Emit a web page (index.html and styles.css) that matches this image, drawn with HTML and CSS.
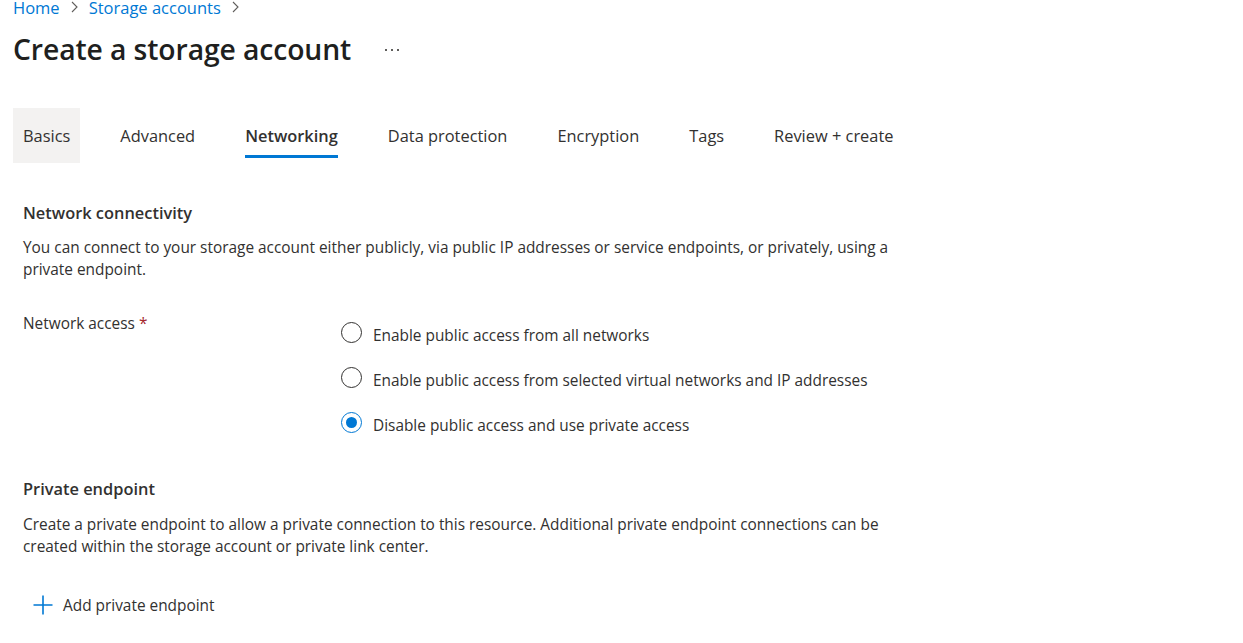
FILE: index.html
```html
<!DOCTYPE html>
<html lang="en">
<head>
<meta charset="utf-8">
<title>Create a storage account</title>
<link rel="stylesheet" href="styles.css">
</head>
<body>
<nav class="breadcrumb">
  <a class="crumb" href="#">Home</a>
  <span class="chev"><svg width="7" height="12" viewBox="0 0 7 12"><path d="M1 1 L6 6 L1 11" fill="none" stroke="#605e5c" stroke-width="1.1"/></svg></span>
  <a class="crumb" href="#">Storage accounts</a>
  <span class="chev"><svg width="7" height="12" viewBox="0 0 7 12"><path d="M1 1 L6 6 L1 11" fill="none" stroke="#605e5c" stroke-width="1.1"/></svg></span>
</nav>
<header class="title-row">
  <h1 class="title">Create a storage account</h1>
  <span class="more"><i></i><i></i><i></i></span>
</header>
<div class="tabs">
  <span class="tab tab-hover">Basics</span>
  <span class="tab">Advanced</span>
  <span class="tab tab-active">Networking</span>
  <span class="tab">Data protection</span>
  <span class="tab">Encryption</span>
  <span class="tab">Tags</span>
  <span class="tab">Review + create</span>
</div>
<main class="content">
  <section class="section">
    <h2 class="section-title">Network connectivity</h2>
    <p class="desc">You can connect to your storage account either publicly, via public IP addresses or service endpoints, or privately, using a private endpoint.</p>
    <div class="field">
      <div class="field-label">Network access <span class="req">*</span></div>
      <div class="radios">
        <label class="radio"><span class="circle"></span><span class="radio-text">Enable public access from all networks</span></label>
        <label class="radio"><span class="circle"></span><span class="radio-text">Enable public access from selected virtual networks and IP addresses</span></label>
        <label class="radio"><span class="circle checked"></span><span class="radio-text">Disable public access and use private access</span></label>
      </div>
    </div>
  </section>
  <section class="section section-pe">
    <h2 class="section-title">Private endpoint</h2>
    <p class="desc">Create a private endpoint to allow a private connection to this resource. Additional private endpoint connections can be created within the storage account or private link center.</p>
    <button class="add-btn"><svg width="20" height="20" viewBox="0 0 20 20"><path d="M10 0.5 V19.5 M0.5 10 H19.5" stroke="#0078d4" stroke-width="1.6" fill="none"/></svg><span>Add private endpoint</span></button>
  </section>
</main>
</body>
</html>
```
FILE: styles.css
```css
* { box-sizing: border-box; }
html, body { margin: 0; padding: 0; background: #fff; }
body {
  font-family: "Open Sans", "Noto Sans", sans-serif;
  color: #323130;
  font-size: 15.4px;
  overflow: hidden;
}
.breadcrumb {
  display: flex;
  align-items: center;
  gap: 11px;
  height: 20px;
  margin-top: -3px;
  padding-left: 13px;
  font-size: 16.5px;
}
.crumb { color: #0078d4; text-decoration: none; }
.chev { display: flex; align-items: center; }
.title-row {
  display: flex;
  align-items: center;
  height: 64px;
  padding-left: 13px;
}
.title {
  margin: 0;
  font-size: 28.3px;
  font-weight: 600;
  color: #201f1e;
  letter-spacing: -0.1px;
}
.more {
  display: flex;
  gap: 4px;
  margin-left: 34px;
  margin-top: 2px;
}
.more i { display: block; width: 2px; height: 2px; background: #605e5c; }
.tabs {
  display: flex;
  gap: 30px;
  margin-top: 27px;
  padding-left: 13px;
  height: 55px;
}
.tab {
  display: flex;
  align-items: center;
  padding: 0 10px 1px;
  font-size: 16.4px;
  color: #323130;
  position: relative;
}
.tab-hover { background: #f3f2f1; }
.tab-active { font-weight: 600; }
.tab-active::after {
  content: "";
  position: absolute;
  left: 10px;
  right: 10px;
  bottom: 5px;
  height: 3px;
  background: #0078d4;
}
.content { padding-left: 23px; width: 923px; }
.section-title {
  margin: 38px 0 0 0;
  font-size: 16.4px;
  font-weight: 600;
  line-height: 24px;
  color: #323130;
}
.desc {
  margin: 12px 0 0 0;
  line-height: 22px;
}
.field {
  display: flex;
  margin-top: 29px;
}
.field-label { width: 318px; padding-top: 3px; line-height: 22px; align-self: flex-start; }
.req { color: #a4262c; }
.radios { display: flex; flex-direction: column; gap: 23px; padding-top: 11px; }
.radio {
  display: flex;
  align-items: center;
  gap: 11px;
  height: 22px;
}
.radio-text { padding-top: 7px; line-height: 22px; }
.circle {
  width: 21px;
  height: 21px;
  border: 1px solid #323130;
  border-radius: 50%;
  display: flex;
  align-items: center;
  justify-content: center;
  flex: none;
}
.circle.checked { border-color: #0078d4; }
.circle.checked::after {
  content: "";
  width: 11px;
  height: 11px;
  border-radius: 50%;
  background: #0078d4;
}
.section-pe .section-title { margin-top: 44px; }
.section-pe .desc { margin-top: 13px; }
.add-btn {
  display: flex;
  align-items: center;
  gap: 10px;
  margin-top: 35px;
  margin-left: 10px;
  padding: 0;
  border: 0;
  background: none;
  font: inherit;
  color: #323130;
  height: 24px;
}
.add-btn svg { flex: none; }
```
